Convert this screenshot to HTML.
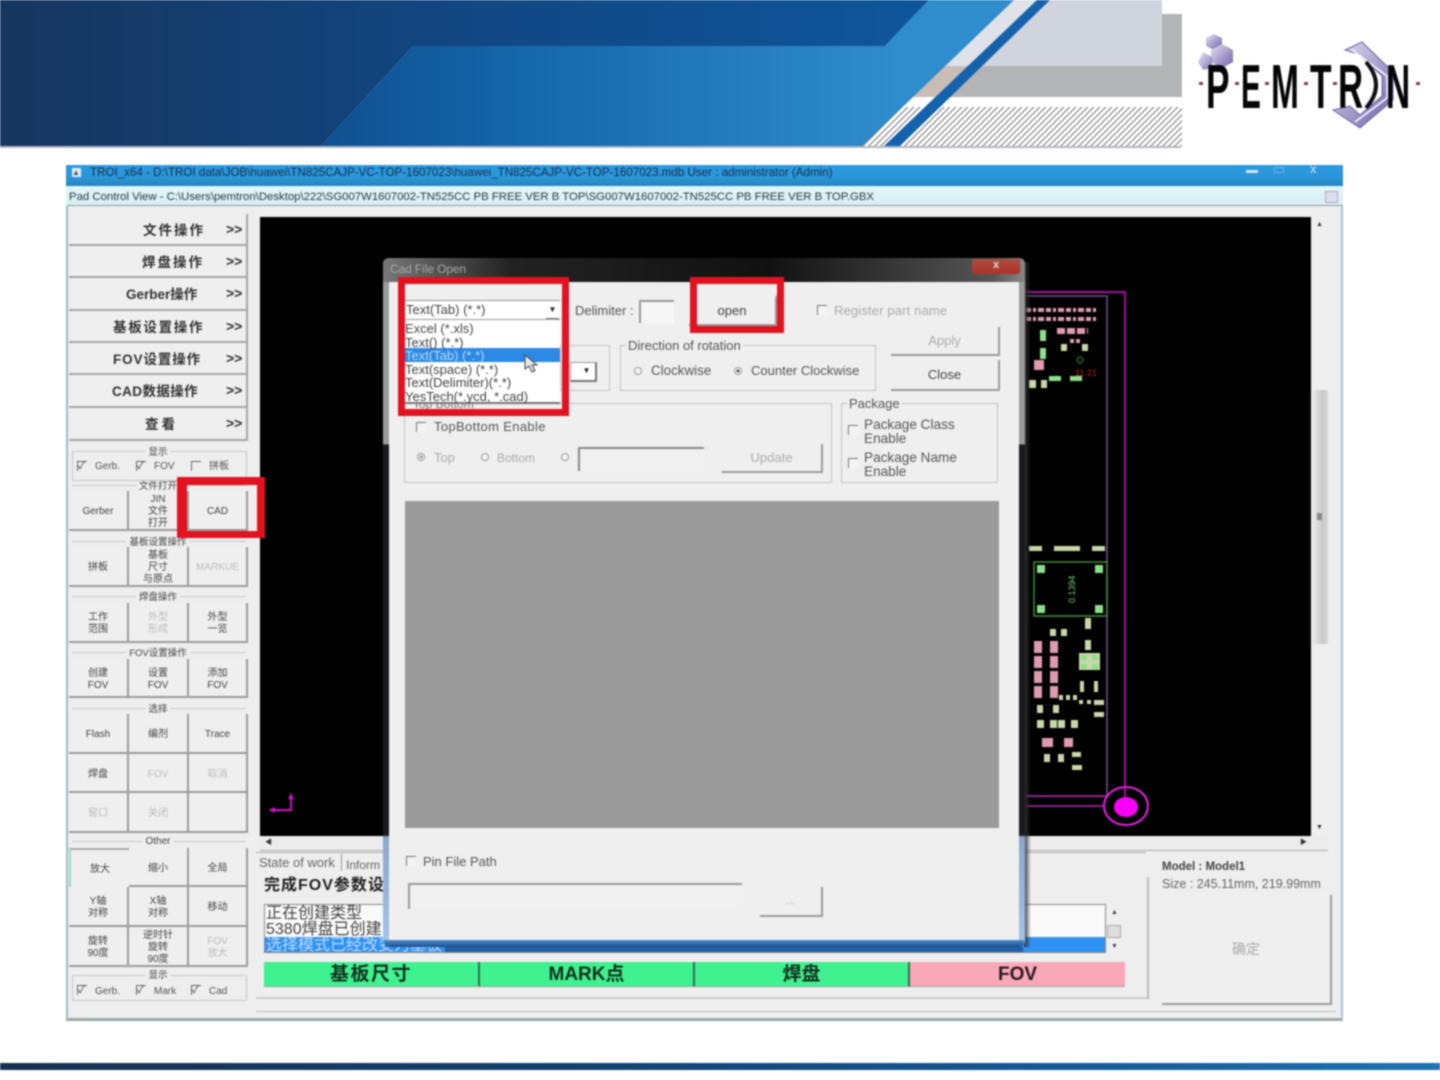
<!DOCTYPE html>
<html><head><meta charset="utf-8"><style>
html,body{margin:0;padding:0;background:#fff;width:1440px;height:1080px;overflow:hidden}
body{position:relative;font-family:"Liberation Sans","Noto Sans CJK SC",sans-serif}
#w{position:absolute;left:0;top:0;width:1440px;height:1080px;filter:blur(.7px)}
#w div{position:absolute;box-sizing:border-box;white-space:nowrap}
.t{color:#555;font-size:13px;line-height:14px}
.b{background:#efefef;border-right:2px solid #9b9b9b;border-bottom:2px solid #9b9b9b;display:flex;align-items:center;justify-content:center;text-align:center;font-size:10px;line-height:12px;color:#444;padding-top:4px;white-space:normal!important}
.g{color:#aaa!important}
.g2{color:#bbb!important}
.m{left:69px;width:179px;background:#efefef;border-right:2px solid #a5a5a5;border-bottom:2px solid #a5a5a5;font-weight:bold;font-size:13.5px;color:#333}
.m span{position:absolute;top:9px;line-height:16px}
.m i{position:absolute;left:157px;top:7px;font-style:normal;font-size:14px;font-weight:bold;line-height:16px}
.lg{height:1px;background:#c8c8c8;left:72px;width:174px}
.lt{font-size:9.5px;line-height:10px;color:#444;background:#eee;padding:0 3px;transform:translateX(-50%);left:158px;margin-top:1.5px}
.fs{border:1px solid #c4c4c4}
.ft{background:#efefef;padding:0 2px;color:#555;font-size:13px;line-height:14px}
.cb{width:10px;height:10px;border-left:1.5px solid #777;border-top:1.5px solid #777;background:#f4f4f4}
.rd{width:8px;height:8px;border-radius:50%;border:1px solid #999;background:#f4f4f4}
.red{border:7px solid #e3121f;z-index:5}
.ck{font-size:10px;color:#555;line-height:12px;margin-top:1px}
.bx{width:10px;height:10px;border-left:1.5px solid #666;border-top:1.5px solid #666;font-size:10px;line-height:9px;color:#333}
.st{top:962px;height:25px;background:#3ff28f;border-right:2px solid #3c6a4c;border-bottom:1px solid #8aa;text-align:center;font-weight:bold;font-size:19px;line-height:25px;color:#14301f}
</style></head><body><div id="w">

<svg style="position:absolute;left:0;top:0" width="1440" height="150" viewBox="0 0 1440 150">
<defs>
<linearGradient id="h1" x1="0" x2="1" y1="0" y2="0"><stop offset="0" stop-color="#16365e"/><stop offset=".5" stop-color="#114682"/><stop offset="1" stop-color="#0e569c"/></linearGradient>
<linearGradient id="h2" gradientUnits="userSpaceOnUse" x1="321" x2="900" y1="0" y2="0"><stop offset="0" stop-color="#0f4f8f"/><stop offset=".35" stop-color="#1467ab"/><stop offset="1" stop-color="#2f8ccd"/></linearGradient>
<pattern id="hp" width="6" height="200" patternUnits="userSpaceOnUse" patternTransform="skewX(-45)"><rect width="6" height="200" fill="#fff"/><rect width="1.6" height="200" fill="#808080"/></pattern>
<linearGradient id="pl" x1="0" x2="1" y1="0" y2="1"><stop offset="0" stop-color="#e6e2f4"/><stop offset="1" stop-color="#6e60a8"/></linearGradient>
</defs>
<rect x="860" y="107" width="322" height="39" fill="url(#hp)"/>
<polygon points="1048,0 1162,0 1162,66 979,66" fill="#d0d4dc"/>
<polygon points="979,66 1162,66 1162,14 1182,14 1182,97 946,97" fill="#b2b4b6"/>
<polygon points="1014,0 1037,0 935,97 912,97" fill="#dfe2e8"/>
<polygon points="945,66 968,66 935,97 912,97" fill="#c9bdb6"/>
<polygon points="0,0 929,0 885,46 413,46 321,146 0,146" fill="url(#h1)"/>
<polygon points="413,46 885,46 929,0 1014,0 862,146 321,146" fill="url(#h2)"/>
<polygon points="1037,0 1050,0 900,146 884,146" fill="#1562ac"/>
<rect x="0" y="146" width="1181" height="2" fill="#7c8796" opacity=".6"/>
<polygon points="1214,34 1222,38 1222,46 1214,50 1206,46 1206,38" fill="url(#pl)"/>
<polygon points="1222,44 1233,50 1233,62 1222,68 1211,62 1211,50" fill="url(#pl)"/>
<polygon points="1203,52 1212,57 1212,68 1203,70 1198,62" fill="url(#pl)" opacity=".85"/>
<polygon points="1345,50 1362,42 1393,72 1393,100 1360,128 1333,110 1350,106 1360,115 1382,96 1382,76 1358,54" fill="url(#pl)" stroke="#6c62a4" stroke-width="1"/>
<polyline points="1352,50 1387,76 1387,98 1355,122" fill="none" stroke="#fff" stroke-width="1.5"/>
<path d="M1366,62Q1386,85 1366,108" fill="none" stroke="#111" stroke-width="4"/>
<g fill="#050505" font-family="Liberation Sans" font-weight="bold" font-size="62">
<text transform="translate(1206,108) scale(.57,1)">P</text>
<text transform="translate(1241,108) scale(.48,1)">E</text>
<text transform="translate(1271,108) scale(.54,1)">M</text>
<text transform="translate(1310,108) scale(.57,1)">T</text>
<text transform="translate(1338,108) scale(.56,1)">R</text>
<text transform="translate(1386,108) scale(.54,1)">N</text>
</g>
<g fill="#8c3a48"><rect x="1199" y="82" width="4" height="3"/><rect x="1235" y="82" width="4" height="3"/><rect x="1265" y="82" width="4" height="3"/><rect x="1304" y="82" width="4" height="3"/><rect x="1333" y="82" width="4" height="3"/><rect x="1416" y="82" width="4" height="3"/></g>
</svg>

<div style="left:0;top:1063px;width:1440px;height:7px;background:linear-gradient(90deg,#15304f,#14406f 40%,#155a96 75%,#2072b0)"></div>

<!-- window -->
<div style="left:66px;top:165px;width:1277px;height:856px;background:#eee;border-left:2px solid #9bbbd4;border-right:2px solid #a8c4d8;border-bottom:3px solid #9aa8a8"></div>
<div style="left:66px;top:165px;width:1277px;height:21px;background:linear-gradient(#2a9ae0,#2b95d8 60%,#2484bd)"></div>
<div class="t" style="left:72px;top:168px;width:9px;height:9px;background:#dfe9f2;font-size:8px;line-height:9px">▲</div>
<div class="t" style="left:90px;top:166px;font-size:11.6px;color:#16304a;line-height:14px">TROI_x64 - D:\TROI data\JOB\huawei\TN825CAJP-VC-TOP-1607023\huawei_TN825CAJP-VC-TOP-1607023.mdb User : administrator (Admin)</div>
<div style="left:1246px;top:170px;width:12px;height:3px;background:#d8e6f2"></div>
<div style="left:1274px;top:167px;width:10px;height:6px;border:1px solid #6fb6e6"></div>
<div class="t" style="left:1310px;top:162px;color:#cfe2f0;font-size:13px">x</div>
<div style="left:66px;top:186px;width:1277px;height:20px;background:linear-gradient(#e0f6f8,#d8eef4);border-bottom:1px solid #8f9a9a;border-left:2px solid #cfe"></div>
<div class="t" style="left:69px;top:190px;font-size:11.37px;color:#2b3a44">Pad Control View - C:\Users\pemtron\Desktop\222\SG007W1607002-TN525CC PB FREE VER B TOP\SG007W1607002-TN525CC PB FREE VER B TOP.GBX</div>
<div style="left:1325px;top:191px;width:13px;height:12px;border:1px solid #aab;background:#dde"></div>

<!-- canvas -->
<div style="left:260px;top:217px;width:1051px;height:619px;background:#000"></div>
<div style="left:1311px;top:217px;width:17px;height:633px;background:#efefef"></div>
<div style="left:1311px;top:390px;width:17px;height:254px;background:linear-gradient(90deg,#eee,#c8c8c8 70%,#d8d8d8)"></div>
<div style="left:1317px;top:513px;width:5px;height:7px;background:#888"></div>
<div class="t" style="left:1316px;top:218px;font-size:7px;color:#333">▲</div>
<div class="t" style="left:1316px;top:821px;font-size:7px;color:#333">▼</div>
<div style="left:260px;top:836px;width:1068px;height:15px;background:#ececec;border-bottom:1px solid #aaa"></div>
<div class="t" style="left:265px;top:836px;font-size:7px;color:#333">◀</div>
<div class="t" style="left:1300px;top:836px;font-size:7px;color:#333">▶</div>

<svg style="position:absolute;left:0;top:0;width:1440px;height:1080px" viewBox="0 0 1440 1080">
<path d="M270 810H291V796" fill="none" stroke="#d010c8" stroke-width="2"/><path d="M269 810l6-3v6zM291 793l-3 6h6z" fill="#d010c8"/>
<g fill="none"><path d="M1026 292H1125V806" stroke="#a010a0" stroke-width="2"/><path d="M1026 296H1107V796H1026" stroke="#8a5aa0" stroke-width="1.3"/><path d="M1026 796H1105M1026 806H1105" stroke="#c020c0" stroke-width="1.5"/><ellipse cx="1126" cy="806" rx="22" ry="19" stroke="#e020e0" stroke-width="2"/></g>
<ellipse cx="1126" cy="807" rx="12" ry="10" fill="#f800f8"/>
<g fill="none" stroke="#e09ab0" stroke-width="4"><path d="M1026 310H1097M1026 319H1097" stroke-dasharray="5 2 3 2 6 2"/><path d="M1057 331H1088" stroke-width="6" stroke-dasharray="8 2"/><path d="M1070 341H1080" stroke-dasharray="4 2"/></g>
<g fill="#e09ab0">
<rect x="1034" y="641" width="8" height="12"/><rect x="1034" y="656" width="8" height="12"/><rect x="1034" y="671" width="8" height="12"/><rect x="1034" y="686" width="8" height="12"/><rect x="1050" y="641" width="8" height="12"/><rect x="1050" y="656" width="8" height="12"/><rect x="1050" y="671" width="8" height="12"/><rect x="1050" y="686" width="8" height="12"/><rect x="1042" y="738" width="11" height="9"/><rect x="1064" y="738" width="9" height="9"/><rect x="1034" y="360" width="10" height="10"/>
</g>
<g fill="#c8d8a8">
<rect x="1061" y="344" width="6" height="7"/><rect x="1082" y="344" width="6" height="7"/><rect x="1029" y="380" width="7" height="8"/><rect x="1041" y="380" width="6" height="8"/>
<rect x="1029" y="546" width="13" height="5"/><rect x="1054" y="546" width="26" height="5"/><rect x="1092" y="546" width="13" height="5"/>
<rect x="1085" y="618" width="6" height="11"/><rect x="1050" y="629" width="6" height="7"/><rect x="1061" y="629" width="6" height="7"/><rect x="1085" y="640" width="6" height="10"/>
<rect x="1079" y="653" width="21" height="17"/><rect x="1080" y="681" width="4" height="11"/><rect x="1094" y="681" width="4" height="11"/>
<rect x="1059" y="695" width="4" height="5"/><rect x="1066" y="695" width="4" height="5"/><rect x="1073" y="695" width="4" height="5"/><rect x="1079" y="700" width="4" height="4"/><rect x="1087" y="700" width="4" height="4"/><rect x="1094" y="700" width="10" height="5"/><rect x="1094" y="712" width="10" height="5"/>
<rect x="1037" y="705" width="6" height="8"/><rect x="1053" y="705" width="6" height="8"/><rect x="1037" y="720" width="7" height="8"/><rect x="1050" y="720" width="7" height="8"/><rect x="1058" y="720" width="7" height="8"/><rect x="1071" y="720" width="7" height="8"/>
<rect x="1044" y="754" width="6" height="8"/><rect x="1058" y="754" width="6" height="8"/><rect x="1072" y="752" width="9" height="5"/><rect x="1072" y="765" width="10" height="5"/>
</g>
<g fill="#8ee08a">
<rect x="1040" y="330" width="6" height="11"/><rect x="1040" y="348" width="6" height="11"/><rect x="1049" y="376" width="12" height="5"/><rect x="1070" y="376" width="12" height="5"/>
<rect x="1037" y="565" width="8" height="8"/><rect x="1095" y="565" width="8" height="8"/><rect x="1037" y="605" width="8" height="8"/><rect x="1095" y="605" width="8" height="8"/>
<rect x="1081" y="655" width="6" height="5"/><rect x="1092" y="655" width="6" height="5"/><rect x="1081" y="664" width="6" height="5"/><rect x="1092" y="664" width="6" height="5"/>
</g>
<rect x="1034" y="562" width="73" height="54" fill="none" stroke="#3e8a3e" stroke-width="1.5"/>
<circle cx="1080" cy="360" r="3" fill="none" stroke="#3e8a3e"/>
<text transform="translate(1075,603) rotate(-90)" font-size="9" fill="#6ed06e" font-family="Liberation Sans">0.1394</text>
<text x="1075" y="376" font-size="9" fill="#c02020" font-family="Liberation Sans">11 21</text>
</svg>

<!-- left menu -->
<div class="m" style="top:214px;height:32px"><span style="left:74px;letter-spacing:2px">文件操作</span><i>&gt;&gt;</i></div>
<div class="m" style="top:246px;height:32px"><span style="left:73px;letter-spacing:2px">焊盘操作</span><i>&gt;&gt;</i></div>
<div class="m" style="top:278px;height:33px"><span style="left:57px">Gerber操作</span><i>&gt;&gt;</i></div>
<div class="m" style="top:311px;height:32px"><span style="left:44px;letter-spacing:1.7px">基板设置操作</span><i>&gt;&gt;</i></div>
<div class="m" style="top:343px;height:32px"><span style="left:44px;letter-spacing:.9px">FOV设置操作</span><i>&gt;&gt;</i></div>
<div class="m" style="top:375px;height:33px"><span style="left:43px;letter-spacing:.4px">CAD数据操作</span><i>&gt;&gt;</i></div>
<div class="m" style="top:408px;height:33px"><span style="left:76px;letter-spacing:3px">查看</span><i>&gt;&gt;</i></div>

<div class="fs" style="left:72px;top:451px;width:175px;height:30px"></div>
<div class="lt" style="top:446px">显示</div>
<div class="bx" style="left:77px;top:461px">✓</div><div class="ck" style="left:95px;top:460px">Gerb.</div>
<div class="bx" style="left:136px;top:461px">✓</div><div class="ck" style="left:154px;top:460px">FOV</div>
<div class="bx" style="left:191px;top:461px"></div><div class="ck" style="left:209px;top:460px">拼板</div>

<div class="lg" style="top:485px"></div><div class="lt" style="top:480px">文件打开</div>
<div class="b" style="left:69px;top:491px;width:60px;height:40px">Gerber</div>
<div class="b" style="left:129px;top:491px;width:60px;height:40px">JIN<br>文件<br>打开</div>
<div class="b" style="left:189px;top:491px;width:59px;height:40px">CAD</div>

<div class="lg" style="top:541px"></div><div class="lt" style="top:536px">基板设置操作</div>
<div class="b" style="left:69px;top:547px;width:60px;height:40px">拼板</div>
<div class="b" style="left:129px;top:547px;width:60px;height:40px">基板<br>尺寸<br>与原点</div>
<div class="b g2" style="left:189px;top:547px;width:59px;height:40px">MARKUE</div>

<div class="lg" style="top:596px"></div><div class="lt" style="top:591px">焊盘操作</div>
<div class="b" style="left:69px;top:603px;width:60px;height:40px">工作<br>范围</div>
<div class="b g2" style="left:129px;top:603px;width:60px;height:40px">外型<br>形成</div>
<div class="b" style="left:189px;top:603px;width:59px;height:40px">外型<br>一览</div>

<div class="lg" style="top:652px"></div><div class="lt" style="top:647px">FOV设置操作</div>
<div class="b" style="left:69px;top:659px;width:60px;height:39px">创建<br>FOV</div>
<div class="b" style="left:129px;top:659px;width:60px;height:39px">设置<br>FOV</div>
<div class="b" style="left:189px;top:659px;width:59px;height:39px">添加<br>FOV</div>

<div class="lg" style="top:708px"></div><div class="lt" style="top:703px">选择</div>
<div class="b" style="left:69px;top:714px;width:60px;height:40px">Flash</div>
<div class="b" style="left:129px;top:714px;width:60px;height:40px">编剂</div>
<div class="b" style="left:189px;top:714px;width:59px;height:40px">Trace</div>
<div class="b" style="left:69px;top:754px;width:60px;height:39px">焊盘</div>
<div class="b g2" style="left:129px;top:754px;width:60px;height:39px">FOV</div>
<div class="b g2" style="left:189px;top:754px;width:59px;height:39px">取消</div>
<div class="b g2" style="left:69px;top:793px;width:60px;height:40px">窗口</div>
<div class="b g2" style="left:129px;top:793px;width:60px;height:40px">关闭</div>
<div class="b" style="left:189px;top:793px;width:59px;height:40px"></div>

<div class="lg" style="top:841px"></div><div class="lt" style="top:835px;font-size:10px">Other</div>
<div class="b" style="left:69px;top:848px;width:60px;height:39px;border-right:0;border-bottom:0;border-left:2px solid #9db;border-top:2px solid #aaa;padding-top:2px">放大</div>
<div class="b" style="left:129px;top:848px;width:60px;height:39px">缩小</div>
<div class="b" style="left:189px;top:848px;width:59px;height:39px">全局</div>
<div class="b" style="left:69px;top:887px;width:60px;height:40px">Y轴<br>对称</div>
<div class="b" style="left:129px;top:887px;width:60px;height:40px">X轴<br>对称</div>
<div class="b" style="left:189px;top:887px;width:59px;height:40px">移动</div>
<div class="b" style="left:69px;top:927px;width:60px;height:40px">旋转<br>90度</div>
<div class="b" style="left:129px;top:927px;width:60px;height:40px">逆时针<br>旋转<br>90度</div>
<div class="b g2" style="left:189px;top:927px;width:59px;height:40px">FOV<br>放大</div>

<div class="fs" style="left:72px;top:975px;width:175px;height:26px"></div>
<div class="lt" style="top:969px">显示</div>
<div class="bx" style="left:77px;top:985px">✓</div><div class="ck" style="left:95px;top:985px">Gerb.</div>
<div class="bx" style="left:136px;top:985px">✓</div><div class="ck" style="left:154px;top:985px">Mark</div>
<div class="bx" style="left:191px;top:985px">✓</div><div class="ck" style="left:209px;top:985px">Cad</div>

<!-- status -->
<div style="left:256px;top:852px;width:890px;height:1px;background:#aaa"></div>
<div class="t" style="left:259px;top:856px;font-size:13px;color:#666">State of work</div>
<div style="left:341px;top:854px;width:1px;height:17px;background:#999"></div>
<div class="t" style="left:346px;top:858px;font-size:12px;color:#666">Inform</div>
<div style="left:264px;top:876px;font-size:16px;font-weight:bold;color:#222;line-height:20px;letter-spacing:1px">完成FOV参数设置</div>
<div style="left:264px;top:904px;width:842px;height:49px;background:#fafafa;border:1px solid #888"></div>
<div style="left:265px;top:937px;width:840px;height:15px;background:#2e92f2"></div>
<div style="left:266px;top:906px;font-size:16px;line-height:16px;color:#444">正在创建类型<br>5380焊盘已创建<br><span style="color:#bcd9f8">选择模式已经改变为基板</span></div>
<div style="left:1106px;top:905px;width:15px;height:48px;background:#efefef"></div>
<div style="left:1107px;top:925px;width:14px;height:13px;background:#ddd;border:1px solid #aaa"></div>
<div class="t" style="left:1111px;top:906px;font-size:7px;color:#444">▲</div>
<div class="t" style="left:1111px;top:940px;font-size:7px;color:#444">▼</div>

<div class="st" style="left:264px;width:216px;letter-spacing:1.5px">基板尺寸</div>
<div class="st" style="left:480px;width:215px">MARK点</div>
<div class="st" style="left:695px;width:215px">焊盘</div>
<div class="st" style="left:910px;width:215px;background:#f9a8b8;border-right:0;color:#2a1a20">FOV</div>

<div style="left:256px;top:1011px;width:1080px;height:1px;background:#bbb"></div>
<div style="left:256px;top:997px;width:892px;height:2px;background:#ccc"></div>
<div style="left:1147px;top:877px;width:2px;height:122px;background:#bbb"></div>
<div style="left:1162px;top:860px;font-size:11.5px;font-weight:bold;color:#444;line-height:14px">Model : Model1</div>
<div style="left:1162px;top:877px;font-size:12.5px;color:#666;line-height:14px">Size : 245.11mm, 219.99mm</div>
<div class="b g" style="left:1162px;top:895px;width:170px;height:110px;font-size:14px;padding-top:0">确定</div>

<!-- dialog -->
<div style="left:1024px;top:262px;width:7px;height:685px;background:linear-gradient(90deg,#333,rgba(60,60,60,0))"></div>
<div style="left:383px;top:258px;width:642px;height:687px;border-radius:6px 6px 4px 4px;background:linear-gradient(#9a9a9a 0,#9a9a9a 186px,#1a1a1e 187px,#1a1a1e 577px,#88a8cc 579px,#a2c4e8 100%)"></div>
<div style="left:383px;top:258px;width:642px;height:24px;border-radius:6px 6px 0 0;background:linear-gradient(90deg,#777,#222 20%,#111 60%,#555 95%,#888)"></div>
<div style="left:384px;top:940px;width:640px;height:7px;background:linear-gradient(#4c8cd0,#1b4e8a);border-radius:0 0 5px 5px"></div>
<div style="left:445px;top:947px;width:578px;height:5px;background:#1c4c88;opacity:.7"></div>
<div class="t" style="left:390px;top:262px;font-size:11.8px;color:#a8a8a8">Cad File Open</div>
<div style="left:972px;top:259px;width:48px;height:15px;background:linear-gradient(#a85040,#b03028);border-radius:0 0 3px 3px;color:#ddd;font-size:11px;font-weight:bold;line-height:13px;text-align:center">x</div>
<div style="left:389px;top:282px;width:630px;height:658px;background:#efefef"></div>

<div class="fs" style="left:620px;top:345px;width:256px;height:46px"></div>
<div class="ft" style="left:626px;top:339px">Direction of rotation</div>
<div class="fs" style="left:560px;top:345px;width:50px;height:46px"></div>
<div style="left:570px;top:362px;width:27px;height:20px;background:#fff;border:1px solid #999;border-right:2px solid #777;border-bottom:2px solid #777"></div>
<div style="left:578px;top:364px;width:17px;height:15px;color:#222;font-size:8px;line-height:14px;text-align:center">▼</div>
<div class="rd" style="left:634px;top:367px"></div><div class="t" style="left:651px;top:364px;font-size:13.4px">Clockwise</div>
<div class="rd" style="left:734px;top:367px;background:radial-gradient(#333 30%,#f4f4f4 35%)"></div><div class="t" style="left:751px;top:364px">Counter Clockwise</div>

<div class="cb" style="left:817px;top:305px"></div><div class="t g" style="left:834px;top:304px;letter-spacing:.15px">Register part name</div>
<div class="b g" style="left:891px;top:327px;width:109px;height:29px;font-size:13px;padding-top:0">Apply</div>
<div class="b" style="left:891px;top:360px;width:109px;height:31px;font-size:13px;line-height:14px;padding-top:0">Close</div>

<div class="fs" style="left:404px;top:403px;width:428px;height:80px"></div>
<div class="t" style="left:413px;top:397px;font-size:12px;color:#777">Top Bottom</div>
<div class="cb" style="left:416px;top:422px"></div><div class="t" style="left:434px;top:420px;letter-spacing:.35px">TopBottom Enable</div>
<div class="rd" style="left:417px;top:453px;background:radial-gradient(#999 35%,#f0f0f0 40%)"></div><div class="t g" style="left:434px;top:451px">Top</div>
<div class="rd" style="left:481px;top:453px"></div><div class="t g" style="left:497px;top:451px;font-size:12px">Bottom</div>
<div class="rd" style="left:561px;top:453px"></div>
<div style="left:578px;top:447px;width:126px;height:24px;border-left:2px solid #888;border-top:2px solid #888;background:#f0f0f0"></div>
<div class="b g" style="left:722px;top:444px;width:101px;height:29px;font-size:13px;padding-top:0">Update</div>

<div class="fs" style="left:841px;top:403px;width:157px;height:80px"></div>
<div class="ft" style="left:847px;top:397px;font-size:13px">Package</div>
<div class="cb" style="left:848px;top:425px"></div><div class="t" style="left:864px;top:418px;font-size:13.6px;line-height:13.5px">Package Class<br>Enable</div>
<div class="cb" style="left:848px;top:458px"></div><div class="t" style="left:864px;top:451px;font-size:13.6px;line-height:13.5px">Package Name<br>Enable</div>

<div style="left:405px;top:501px;width:594px;height:327px;background:#9a9a9a"></div>
<div class="cb" style="left:406px;top:856px"></div><div class="t" style="left:423px;top:855px">Pin File Path</div>
<div style="left:408px;top:883px;width:334px;height:26px;border-left:2px solid #999;border-top:2px solid #999;background:#f0f0f0"></div>
<div class="b g" style="left:760px;top:887px;width:63px;height:30px;font-size:11px;padding-top:0">...</div>

<!-- combo & dropdown -->
<div style="left:405px;top:300px;width:155px;height:21px;background:#fff;border-top:1px solid #999;border-bottom:2px solid #999"></div>
<div class="t" style="left:406px;top:303px;color:#444">Text(Tab) (*.*)</div>
<div style="left:546px;top:302px;width:13px;height:17px;color:#222;font-size:8px;line-height:15px;text-align:center;border-bottom:1px solid #777">▼</div>
<div style="left:405px;top:320px;width:155px;height:84px;background:#fff;border-bottom:2px solid #777"></div>
<div style="left:405px;top:348px;width:155px;height:13.5px;background:#2b8ae6"></div>
<div class="t" style="left:405px;top:322px;color:#444;line-height:13.6px">Excel (*.xls)<br>Text() (*.*)<br><span style="color:#bcd8f4">Text(Tab) (*.*)</span><br>Text(space) (*.*)<br>Text(Delimiter)(*.*)<br>YesTech(*.ycd, *.cad)</div>
<div class="t" style="left:575px;top:304px;color:#555">Delimiter :</div>
<div style="left:639px;top:300px;width:35px;height:23px;background:#f6f6f6;border-left:2px solid #999;border-top:2px solid #999"></div>
<div class="b" style="left:689px;top:296px;width:88px;height:30px;font-size:13px;color:#444;background:#efefef;padding-top:2px">open</div>

<svg style="position:absolute;left:524px;top:354px" width="16" height="20" viewBox="0 0 16 20"><path d="M1 1V15L5 12L8 18L11 16.500L8 11H13Z" fill="#e8e8ea" stroke="#444" stroke-width="1"/></svg>

<div class="red" style="left:398px;top:277px;width:171px;height:139px;background:transparent"></div>
<div class="red" style="left:690px;top:277px;width:94px;height:56px"></div>
<div class="red" style="left:177px;top:477px;width:88px;height:61px;border-width:8px 8px 7px 10px"></div>
</div></body></html>
